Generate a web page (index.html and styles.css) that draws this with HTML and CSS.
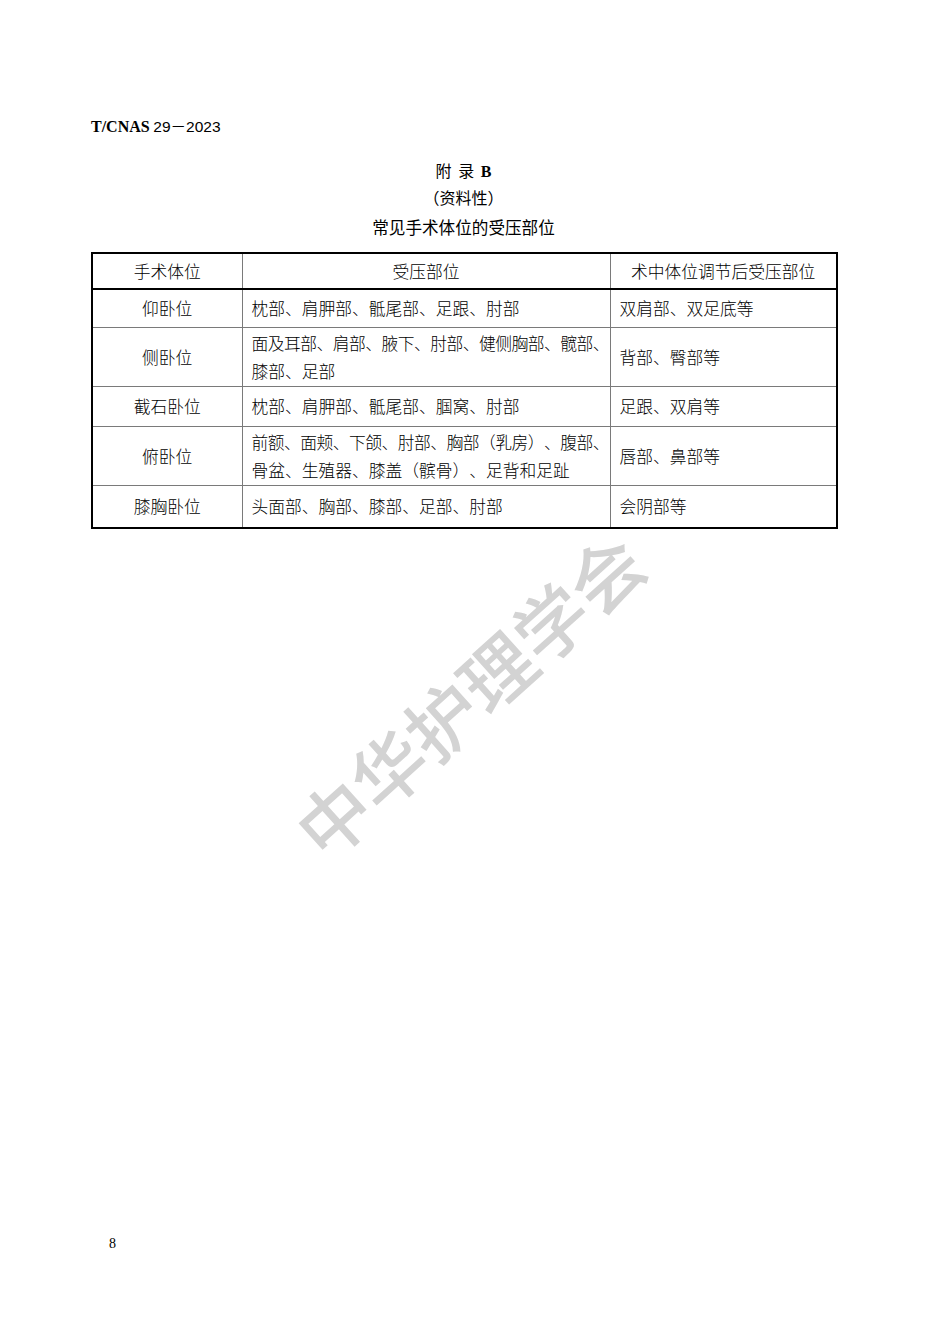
FILE: index.html
```html
<!DOCTYPE html>
<html lang="zh-CN">
<head>
<meta charset="utf-8">
<title>T/CNAS 29－2023 附录B</title>
<link rel="stylesheet" href="styles.css">
</head>
<body>
<div class="page">
  <div class="doc-id"><span class="id-org">T/CNAS</span> <span class="id-num">29－2023</span></div>

  <div class="titles">
    <div class="t-annex">附 录 <span class="t-b">B</span></div>
    <div class="t-sub">（资料性）</div>
    <div class="t-main">常见手术体位的受压部位</div>
  </div>

  <table class="grid">
    <colgroup>
      <col class="c1">
      <col class="c2">
      <col class="c3">
    </colgroup>
    <thead>
      <tr class="r-head">
        <th>手术体位</th>
        <th>受压部位</th>
        <th>术中体位调节后受压部位</th>
      </tr>
    </thead>
    <tbody>
      <tr class="r1">
        <td class="pos">仰卧位</td>
        <td class="txt">枕部、肩胛部、骶尾部、足跟、肘部</td>
        <td class="txt">双肩部、双足底等</td>
      </tr>
      <tr class="r2">
        <td class="pos">侧卧位</td>
        <td class="txt"><span class="tight">面及耳部、肩部、腋下、肘部、健侧胸部、髋部、</span><br>膝部、足部</td>
        <td class="txt">背部、臀部等</td>
      </tr>
      <tr class="r3">
        <td class="pos">截石卧位</td>
        <td class="txt">枕部、肩胛部、骶尾部、腘窝、肘部</td>
        <td class="txt">足跟、双肩等</td>
      </tr>
      <tr class="r4">
        <td class="pos">俯卧位</td>
        <td class="txt"><span class="tight">前额、面颊、下颌、肘部、胸部（乳房）、腹部、</span><br>骨盆、生殖器、膝盖（髌骨）、足背和足趾</td>
        <td class="txt">唇部、鼻部等</td>
      </tr>
      <tr class="r5">
        <td class="pos">膝胸卧位</td>
        <td class="txt">头面部、胸部、膝部、足部、肘部</td>
        <td class="txt">会阴部等</td>
      </tr>
    </tbody>
  </table>

  <div class="footer">8</div>

  <div class="watermark">中华护理学会</div>
</div>
</body>
</html>
```

FILE: styles.css
```css
html, body {
  margin: 0;
  padding: 0;
  background: #ffffff;
}

body {
  width: 950px;
  height: 1344px;
  overflow: hidden;
  color: #000;
  font-family: "Noto Sans CJK SC", "Liberation Sans", sans-serif;
  text-spacing-trim: space-all;
  font-feature-settings: "halt" 0, "chws" 0;
}

.page {
  position: relative;
  box-sizing: border-box;
  width: 950px;
  height: 1344px;
  padding: 115px 0 0 91px;
  display: flex;
  flex-direction: column;
}

.doc-id {
  height: 20px;
  line-height: 20px;
  font-size: 16px;
  white-space: nowrap;
}

.id-org {
  font-family: "Liberation Serif", serif;
  font-weight: bold;
}

.id-num {
  font-family: "Liberation Sans", "Noto Sans CJK SC", sans-serif;
  font-weight: normal;
  font-size: 15.5px;
}

.titles {
  width: 745px;
  margin-top: 22px;
  text-align: center;
  font-size: 16px;
  font-weight: 400;
}

.t-annex,
.t-sub {
  height: 27px;
  line-height: 27px;
}

.t-annex {
  word-spacing: 3px;
}

.t-b {
  font-family: "Liberation Serif", serif;
  font-weight: bold;
}

.t-main {
  margin-top: 2px;
  height: 28px;
  line-height: 28px;
  font-size: 16.6px;
}

.grid {
  margin-top: 11px;
  width: 745px;
  table-layout: fixed;
  border-collapse: collapse;
  border: 2px solid #000;
  font-size: 16.75px;
  font-weight: 300;
}

.c1 { width: 150px; }
.c2 { width: 368px; }
.c3 { width: 227px; }

.grid th,
.grid td {
  border: 1px solid #7a7a7a;
  padding: 0 0 0 9px;
  vertical-align: middle;
  line-height: 28px;
  white-space: nowrap;
}

.grid th {
  font-weight: 300;
  text-align: center;
  padding: 0;
  border-bottom: 2px solid #000;
}

.grid td.pos {
  text-align: center;
  padding: 0;
}

.grid .r-head { height: 36px; }
.grid .r1 { height: 38px; }
.grid .r2 { height: 59px; }
.grid .r3 { height: 40px; }
.grid .r4 { height: 59px; }
.grid .r5 { height: 43px; }

.tight {
  letter-spacing: -0.5px;
}

.footer {
  margin-top: auto;
  margin-bottom: 90px;
  padding-left: 18px;
  height: 20px;
  line-height: 20px;
  font-family: "Liberation Serif", serif;
  font-size: 14px;
}

.watermark {
  position: absolute;
  left: 468px;
  top: 694px;
  transform: translate(-50%, -50%) rotate(-42deg);
  font-size: 73px;
  letter-spacing: 0;
  line-height: 1;
  white-space: nowrap;
  color: #d3d3d3;
  font-weight: 500;
  pointer-events: none;
}
```
